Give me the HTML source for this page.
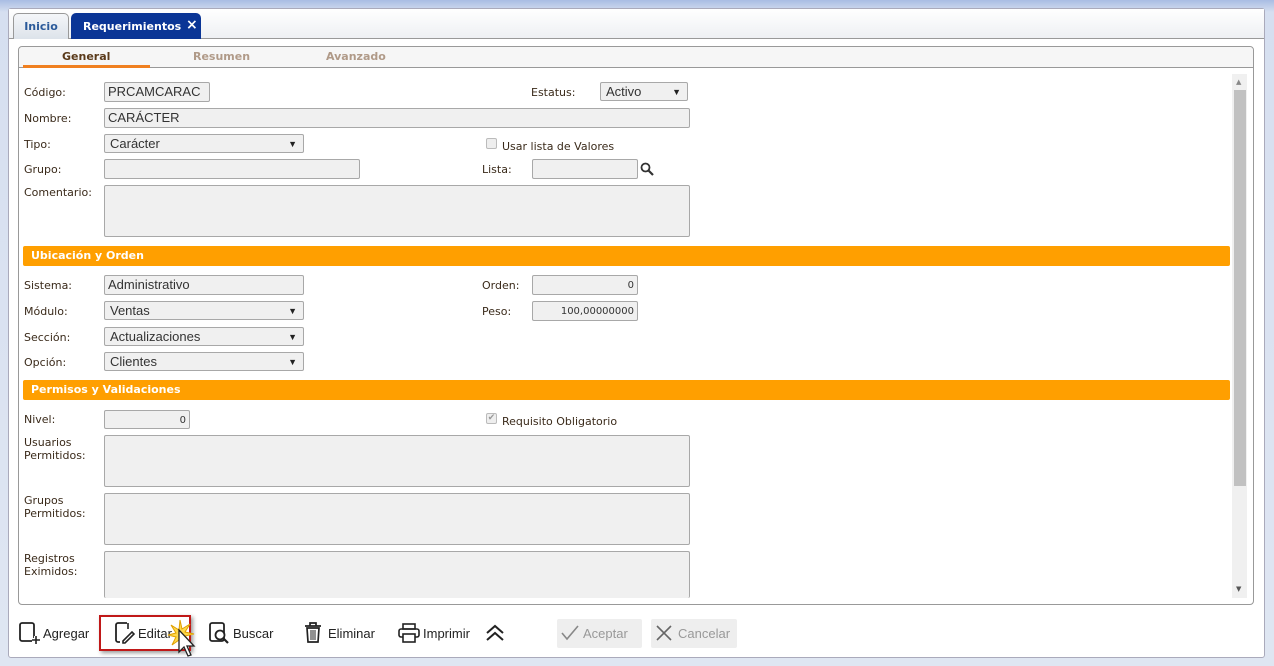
<!DOCTYPE html>
<html><head><meta charset="utf-8"><style>
*{box-sizing:border-box;margin:0;padding:0}
body{width:1274px;height:666px;overflow:hidden;background:linear-gradient(#a9bde3 0,#d6dff0 12px,#dfe6f2 100%);font-family:"DejaVu Sans",Verdana,sans-serif;position:relative}
.a{position:absolute}
.outer{left:8px;top:8px;width:1257px;height:650px;background:#fff;border:1px solid #aab;border-radius:3px}
.tabbar{left:9px;top:9px;width:1255px;height:30px;background:linear-gradient(#fff,#eef0f3);border-bottom:1px solid #999}
.tab{top:13px;height:26px;border:1px solid #999;border-bottom:none;border-radius:5px 5px 0 0;font-size:11px;font-weight:bold;line-height:25px;text-align:center}
.panel{left:18px;top:46px;width:1236px;height:559px;border:1px solid #999;border-radius:4px;background:#fff}
.sub{top:47px;font-size:11px;font-weight:bold;color:#b09a88;line-height:20px}
.lbl{font-size:11px;color:#3a2a1a;line-height:13px}
.in{background:#f0f0f0;border:1px solid #a8a8a8;border-radius:2px;font-family:"Liberation Sans",Arial,sans-serif;font-size:13px;color:#333;padding:0 3px;line-height:18px}
.sel::after{content:"▼";position:absolute;right:6px;top:0;font-size:9px;color:#222}
.sel{padding-left:5px}
.r{text-align:right;font-size:10px;font-family:"DejaVu Sans",sans-serif;line-height:20px}
.bar{left:23px;width:1207px;height:20px;background:#ff9f00;color:#fff;font-size:11px;font-weight:bold;line-height:20px;padding-left:8px;border-radius:2px}
.cb{width:11px;height:11px;border:1px solid #bbb;background:#eee;border-radius:2px}
.tb{top:626px;font-size:13px;font-family:"Liberation Sans",Arial,sans-serif;color:#222}
.btn{top:619px;height:29px;background:#eeeeee;border-radius:2px;font-family:"Liberation Sans",Arial,sans-serif;font-size:13px;color:#999;line-height:29px}
</style></head><body>
<div class="a outer"></div>
<div class="a tabbar"></div>
<div class="a tab" style="left:13px;width:56px;color:#2b5a9a;background:linear-gradient(#f4f6f9,#dde3ea)">Inicio</div>
<div class="a tab" style="left:71px;width:130px;background:#0a3596;color:#fff;border-color:#0a3596;text-align:left;padding-left:11px">Requerimientos</div>
<div class="a" style="left:186px;top:17px;color:#fff;font-size:14px;font-weight:bold;font-family:'DejaVu Sans',sans-serif">×</div>
<div class="a panel"></div>
<div class="a" style="left:19px;top:47px;width:1234px;height:21px;background:#f6f6f6;border-bottom:1px solid #999;border-radius:4px 4px 0 0"></div>
<div class="a sub" style="left:62px;color:#5a3a1a">General</div>
<div class="a" style="left:23px;top:65px;width:127px;height:3px;background:#f08020"></div>
<div class="a sub" style="left:193px">Resumen</div>
<div class="a sub" style="left:326px">Avanzado</div>
<div class="a" style="left:1232px;top:74px;width:15px;height:524px;background:#f0f0f0"></div>
<div class="a" style="left:1234px;top:90px;width:12px;height:396px;background:#c1c1c1"></div>
<div class="a" style="left:1236px;top:78px;font-size:7px;color:#888">▲</div>
<div class="a" style="left:1236px;top:585px;font-size:7px;color:#555">▼</div>

<div class="a lbl" style="left:24px;top:86px">Código:</div>
<div class="a in" style="left:104px;top:82px;width:106px;height:20px">PRCAMCARAC</div>
<div class="a lbl" style="left:531px;top:86px">Estatus:</div>
<div class="a in sel" style="left:600px;top:82px;width:88px;height:19px">Activo</div>
<div class="a lbl" style="left:24px;top:112px">Nombre:</div>
<div class="a in" style="left:104px;top:108px;width:586px;height:20px">CARÁCTER</div>
<div class="a lbl" style="left:24px;top:138px">Tipo:</div>
<div class="a in sel" style="left:104px;top:134px;width:200px;height:19px">Carácter</div>
<div class="a cb" style="left:486px;top:138px"></div>
<div class="a lbl" style="left:502px;top:140px">Usar lista de Valores</div>
<div class="a lbl" style="left:24px;top:163px">Grupo:</div>
<div class="a in" style="left:104px;top:159px;width:256px;height:20px"></div>
<div class="a lbl" style="left:482px;top:163px">Lista:</div>
<div class="a in" style="left:532px;top:159px;width:106px;height:20px"></div>
<svg class="a" style="left:640px;top:162px" width="14" height="14"><circle cx="5.5" cy="5.5" r="4" fill="none" stroke="#333" stroke-width="1.8"/><path d="M8.5 8.5L13 13" stroke="#333" stroke-width="2.2"/></svg>
<div class="a lbl" style="left:24px;top:186px">Comentario:</div>
<div class="a in" style="left:104px;top:185px;width:586px;height:52px"></div>

<div class="a bar" style="top:246px">Ubicación y Orden</div>
<div class="a lbl" style="left:24px;top:279px">Sistema:</div>
<div class="a in" style="left:104px;top:275px;width:200px;height:20px">Administrativo</div>
<div class="a lbl" style="left:482px;top:279px">Orden:</div>
<div class="a in r" style="left:532px;top:275px;width:106px;height:20px">0</div>
<div class="a lbl" style="left:24px;top:305px">Módulo:</div>
<div class="a in sel" style="left:104px;top:301px;width:200px;height:19px">Ventas</div>
<div class="a lbl" style="left:482px;top:305px">Peso:</div>
<div class="a in r" style="left:532px;top:301px;width:106px;height:20px">100,00000000</div>
<div class="a lbl" style="left:24px;top:331px">Sección:</div>
<div class="a in sel" style="left:104px;top:327px;width:200px;height:19px">Actualizaciones</div>
<div class="a lbl" style="left:24px;top:356px">Opción:</div>
<div class="a in sel" style="left:104px;top:352px;width:200px;height:19px">Clientes</div>

<div class="a bar" style="top:380px">Permisos y Validaciones</div>
<div class="a lbl" style="left:24px;top:413px">Nivel:</div>
<div class="a in r" style="left:104px;top:410px;width:86px;height:19px;line-height:19px">0</div>
<div class="a cb" style="left:486px;top:413px;font-size:9px;line-height:9px;color:#999;text-align:center">✔</div>
<div class="a lbl" style="left:502px;top:415px">Requisito Obligatorio</div>
<div class="a lbl" style="left:24px;top:436px">Usuarios<br>Permitidos:</div>
<div class="a in" style="left:104px;top:435px;width:586px;height:52px"></div>
<div class="a lbl" style="left:24px;top:494px">Grupos<br>Permitidos:</div>
<div class="a in" style="left:104px;top:493px;width:586px;height:52px"></div>
<div class="a lbl" style="left:24px;top:552px">Registros<br>Eximidos:</div>
<div class="a in" style="left:104px;top:551px;width:586px;height:47px;border-bottom:none"></div>

<svg class="a" style="left:19px;top:622px" width="22" height="22"><rect x="1" y="1" width="14" height="18" rx="2" fill="none" stroke="#222" stroke-width="1.8"/><path d="M17 14v8M13 18h8" stroke="#fff" stroke-width="4"/><path d="M17 14v8M13 18h8" stroke="#222" stroke-width="1.6"/></svg>
<div class="a tb" style="left:43px">Agregar</div>
<div class="a" style="left:99px;top:615px;width:92px;height:36px;border:2px solid #c01818;box-shadow:2px 2px 4px rgba(0,0,0,.4)"></div>
<svg class="a" style="left:115px;top:622px" width="20" height="22"><path d="M12 1H3a2 2 0 0 0-2 2v15a2 2 0 0 0 2 2h2" fill="none" stroke="#222" stroke-width="1.8"/><path d="M13 1v6M8 19l9-9 2 2-9 9H8z" fill="none" stroke="#222" stroke-width="1.6"/></svg>
<div class="a tb" style="left:138px">Editar</div>
<svg class="a" style="left:166px;top:618px" width="36" height="46"><path d="M14 2l2 9 8-5-5 8 9 2-9 2 6 7-8-4-1 9-3-8-7 5 4-8-8-2 8-2-5-8 8 5z" fill="#ffd84a" stroke="#e0a000"/><path d="M13 12v22l5-5 4 9 3-1-4-9h7z" fill="#fff" stroke="#222" stroke-width="1.3"/></svg>
<svg class="a" style="left:209px;top:622px" width="22" height="22"><rect x="1" y="1" width="14" height="18" rx="2" fill="none" stroke="#222" stroke-width="1.8"/><circle cx="11" cy="13" r="4.5" fill="#fff" stroke="#222" stroke-width="1.8"/><path d="M14 16l5 5" stroke="#222" stroke-width="2.2"/></svg>
<div class="a tb" style="left:233px">Buscar</div>
<svg class="a" style="left:304px;top:622px" width="18" height="22"><path d="M1 4h16M6 4V1h6v3M3 6l1 14h10l1-14z" fill="none" stroke="#222" stroke-width="1.7"/><path d="M7 8v10M9 8v10M11 8v10" stroke="#222"/></svg>
<div class="a tb" style="left:328px">Eliminar</div>
<svg class="a" style="left:398px;top:623px" width="22" height="20"><rect x="5" y="1" width="12" height="5" fill="none" stroke="#222" stroke-width="1.6"/><rect x="1" y="6" width="20" height="8" rx="2" fill="none" stroke="#222" stroke-width="1.6"/><rect x="5" y="11" width="12" height="8" fill="#fff" stroke="#222" stroke-width="1.6"/></svg>
<div class="a tb" style="left:423px">Imprimir</div>
<svg class="a" style="left:485px;top:624px" width="20" height="18"><path d="M2 9l8-7 8 7M2 16l8-7 8 7" fill="none" stroke="#222" stroke-width="2"/></svg>
<div class="a btn" style="left:557px;width:85px;padding-left:26px">Aceptar</div>
<svg class="a" style="left:561px;top:625px" width="18" height="16"><path d="M1 8l5 6L17 1" fill="none" stroke="#888" stroke-width="1.6"/></svg>
<div class="a btn" style="left:651px;width:86px;padding-left:27px">Cancelar</div>
<svg class="a" style="left:656px;top:625px" width="16" height="16"><path d="M1 1l14 14M15 1L1 15" stroke="#666" stroke-width="1.6"/></svg>
</body></html>
